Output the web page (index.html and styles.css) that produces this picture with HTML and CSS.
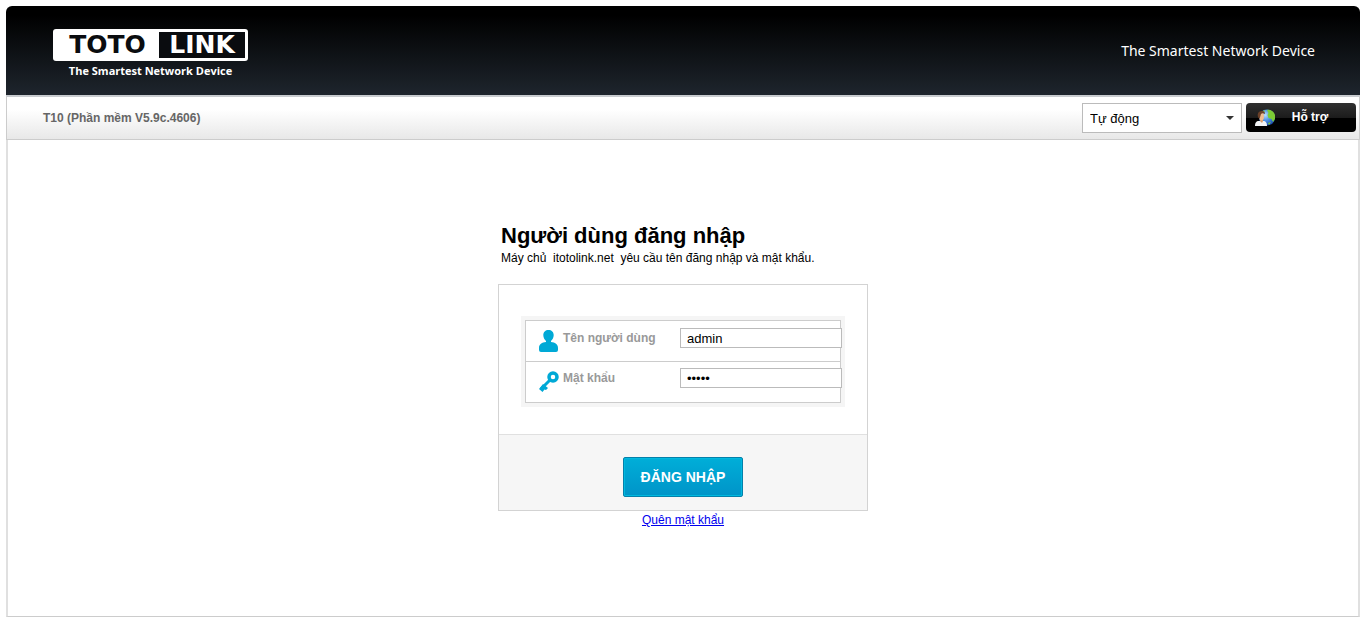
FILE: index.html
```html
<!DOCTYPE html>
<html lang="vi">
<head>
<meta charset="utf-8">
<title>TOTOLINK</title>
<link rel="stylesheet" href="styles.css">
</head>
<body>
<header class="header">
  <div class="brand">
    <div class="logo"><span class="logo-left">TOTO</span><span class="logo-right">LINK</span></div>
    <div class="brand-tagline">The Smartest Network Device</div>
  </div>
  <div class="slogan">The Smartest Network Device</div>
</header>
<div class="toolbar">
  <div class="version">T10 (Phần mềm V5.9c.4606)</div>
  <div class="tools">
    <div class="language">
      <select class="language-select" aria-label="Ngôn ngữ"><option>Tự động</option></select>
      <svg class="arrow" width="8" height="4" viewBox="0 0 8 4"><path d="M0 0h8L4 4z" fill="#333"/></svg>
    </div>
    <button class="help" type="button">
      <svg class="help-icon" width="22" height="18" viewBox="0 0 22 18">
        <defs>
          <radialGradient id="sea" cx=".4" cy=".35" r=".7"><stop offset="0" stop-color="#b9e0ff"/><stop offset=".5" stop-color="#4a90e2"/><stop offset="1" stop-color="#1743a8"/></radialGradient>
        </defs>
        <circle cx="13" cy="8.500" r="8" fill="url(#sea)"/>
        <path d="M13 1c3-1 7 1 8 5l0 4-2 3-1.500-3-3-1-1-3 1-2zM8 3l3-2-1 3zM14 14l3-1-2 3z" fill="#7ccb35"/>
        <path d="M1 17c0-3 1-5 4-5h4c3 0 4 2 4 5z" fill="#f1f3f5"/>
        <path d="M6 10h3v2l-1 2-2-2z" fill="#d99a67"/>
        <ellipse cx="7.500" cy="7.500" rx="2.500" ry="4" fill="#f0bd90"/>
        <path d="M4 8c-1-4 1-6 4-6 2 0 3 1 3 3-2-1-3-1-4 0L5.500 10z" fill="#6b4028"/>
      </svg>
      <span class="help-label">Hỗ trợ</span>
    </button>
  </div>
</div>
<main class="content">
  <form class="login">
    <h1 class="title">Người dùng đăng nhập</h1>
    <p class="hint">Máy chủ &nbsp;itotolink.net &nbsp;yêu cầu tên đăng nhập và mật khẩu.</p>
    <div class="panel">
      <div class="fields-area">
        <div class="fields">
          <div class="row">
            <svg class="icon" width="20" height="24" viewBox="0 0 20 24"><path d="M9.500 1C6.500 1 4.300 3 4.300 6c0 2.500 1.200 4.500 2.700 6v1c-4 .5-7 2-7 6v2q0 2 2 2h15q2 0 2-2v-2c0-4-3-5.500-7-6v-1c1.500-1.500 2.700-3.500 2.700-6 0-3-2.200-5-5.200-5z" fill="#00a9d6"/></svg>
            <label class="label" for="user">Tên người dùng</label>
            <input class="input" id="user" type="text" value="admin">
          </div>
          <div class="row">
            <svg class="icon" width="20" height="24" viewBox="0 0 20 24"><g fill="none" stroke="#00a9d6"><circle cx="14" cy="8" r="4" stroke-width="3.500"/><path d="M11 11L2 20" stroke-width="3"/></g><path d="M4 15l5 4-2 2-1.500-.5L3.500 23 0 20z" fill="#00a9d6"/></svg>
            <label class="label" for="pass">Mật khẩu</label>
            <input class="input" id="pass" type="password" value="admin">
          </div>
        </div>
      </div>
      <div class="actions"><button class="submit" type="submit">ĐĂNG NHẬP</button></div>
    </div>
    <a class="forgot" href="#">Quên mật khẩu</a>
  </form>
</main>
</body>
</html>
```
FILE: styles.css
```css
* { box-sizing: border-box; }
body {
  margin: 0;
  padding: 6px 6px 0;
  min-height: 100vh;
  display: flex;
  flex-direction: column;
  background: #fff;
  color: #000;
  font: 12px/16px "Liberation Sans", Arial, sans-serif;
}
.header {
  display: flex;
  justify-content: space-between;
  align-items: flex-start;
  padding: 23px 45px 14px 47px;
  border-bottom: 2px solid #c8cbcf;
  border-radius: 6px 6px 0 0;
  background: linear-gradient(#000 10%, #1e252d);
  color: #fff;
}
.brand { text-align: center; }
.logo {
  display: flex;
  width: 195px;
  height: 32px;
  padding: 3px;
  border-radius: 3px;
  background: #fff;
  font: bold 25px/26px "DejaVu Sans", sans-serif;
}
.logo-left { flex: 1; color: #0a0c0f; }
.logo-right { width: 86px; background: #0a0c0f; color: #fff; }
.brand-tagline { font: bold 11px/20px "Open Sans", sans-serif; }
.slogan { padding-top: 12px; font: 14px/20px "Noto Sans", sans-serif; }
.toolbar {
  display: flex;
  justify-content: space-between;
  align-items: center;
  height: 43px;
  padding: 0 3px 0 36px;
  border: 1px solid #ccc;
  border-width: 0 1px 1px;
  background: linear-gradient(#fff 30%, #e8e8e8);
}
.version { color: #666; font-weight: bold; }
.tools { display: flex; gap: 4px; }
.language { position: relative; }
.language-select {
  appearance: none;
  display: block;
  width: 160px;
  height: 30px;
  padding: 0 7px;
  border: 1px solid #bbb;
  border-radius: 0;
  background: #fff;
  color: #000;
  font: 13px "Liberation Sans", Arial, sans-serif;
}
.arrow { position: absolute; right: 8px; top: 13px; pointer-events: none; }
.help {
  display: flex;
  align-items: center;
  width: 110px;
  height: 29px;
  padding: 0 8px;
  border: 0;
  border-radius: 4px;
  background: linear-gradient(#303030, #1c1c1c 50%, #000 50%);
  color: #fff;
  font: bold 12px/16px "Liberation Sans", Arial, sans-serif;
}
.help-label { flex: 1; padding: 0 4px 2px 0; }
.content {
  flex: 1;
  padding: 82px 20px;
  border: 2px solid #e0e0e0;
  border-width: 0 2px 1px;
  border-bottom-color: #ccc;
}
.login { max-width: 370px; margin: 0 auto; text-align: center; }
.title {
  margin: 0;
  padding-left: 3px;
  text-align: left;
  font-size: 22px;
  line-height: 28px;
}
.hint { margin: 0 0 18px; padding-left: 3px; text-align: left; }
.panel { border: 1px solid #d3d3d3; background: #fff; }
.fields-area { padding: 31px 22px 27px; }
.fields { border: 1px solid #ccc; box-shadow: 0 0 0 4px #f5f5f5; margin: 4px; }
.row {
  display: flex;
  align-items: flex-start;
  height: 40px;
  padding: 7px 0 0 13px;
  text-align: left;
}
.row + .row { height: 41px; border-top: 1px solid #ccc; padding-top: 6px; }
.label {
  flex: none;
  width: 117px;
  padding-top: 2px;
  margin-left: 4px;
  color: #999;
  font-weight: bold;
}
.icon { flex: none; margin-top: 1px; }
.input {
  flex: none;
  width: 162px;
  height: 20px;
  padding: 0 6px;
  border: 1px solid #bbb;
  background: #fff;
  color: #000;
  font: 13px "Liberation Sans", Arial, sans-serif;
}
.actions {
  padding: 22px 0 13px;
  border-top: 1px solid #e0e0e0;
  background: #f6f6f6;
}
.submit {
  width: 120px;
  height: 40px;
  padding: 0;
  border: 1px solid #0480aa;
  border-radius: 2px;
  background: linear-gradient(#00aed8, #0094c8);
  box-shadow: inset 0 0 0 1px #00b9df;
  color: #fff;
  font: bold 14px "Liberation Sans", Arial, sans-serif;
}
.forgot { display: inline-block; line-height: 18px; color: #00e; }
```
